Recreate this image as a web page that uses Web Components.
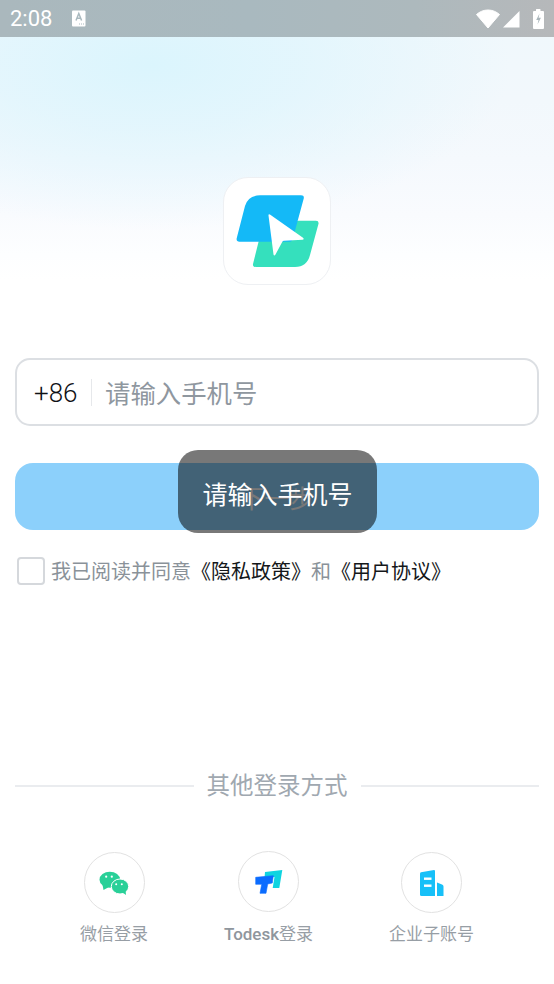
<!DOCTYPE html>
<html lang="zh-CN"><head><meta charset="utf-8"><title>登录</title>
<style>
html,body{margin:0;padding:0;background:#fff}
body{width:554px;height:984px;overflow:hidden;font-family:Roboto,"Noto Sans CJK SC",sans-serif}
</style></head><body>
<login-screen>
  <status-bar slot="status"></status-bar>
  <app-logo slot="logo"></app-logo>
  <phone-field slot="field" code="+86" placeholder="请输入手机号"></phone-field>
  <primary-button slot="button">下一步</primary-button>
  <agree-row slot="agree"></agree-row>
  <or-divider slot="divider">其他登录方式</or-divider>
  <login-options slot="options">
    <login-option label="微信登录" kind="wechat"></login-option>
    <login-option label="登录" latin="Todesk" kind="todesk"></login-option>
    <login-option label="企业子账号" kind="corp"></login-option>
  </login-options>
  <toast-box slot="toast">请输入手机号</toast-box>
</login-screen>
<script>
function def(name,html,init){
  customElements.define(name,class extends HTMLElement{
    constructor(){super();this.attachShadow({mode:'open'}).innerHTML=typeof html==='function'?html(this):html;}
    connectedCallback(){if(init)init(this)}
  });
}
def('login-screen',`<style>
:host{display:flex;flex-direction:column;position:relative;width:554px;height:984px;overflow:hidden;
background:
 radial-gradient(360px 165px at 150px 65px,#dbf5fd 0%,rgba(222,245,253,.72) 42%,rgba(230,246,253,0) 100%),
 linear-gradient(180deg,#eff8fc 0,#f2f8fc 100px,#f5f9fd 160px,#f9fbfe 215px,#fdfeff 255px,#fff 280px)}
.logo{display:flex;justify-content:center;padding-top:140px}
.field{padding:73px 15px 0}
.button{padding:37px 15px 0}
.agree{padding:26px 17px 0}
.divider{padding:184px 15px 0}
.options{padding:49px 0 0}
</style>
<slot name="status"></slot>
<div class="logo"><slot name="logo"></slot></div>
<div class="field"><slot name="field"></slot></div>
<div class="button"><slot name="button"></slot></div>
<div class="agree"><slot name="agree"></slot></div>
<div class="divider"><slot name="divider"></slot></div>
<div class="options"><slot name="options"></slot></div>
<slot name="toast"></slot>`);
def('status-bar',`<style>
:host{display:flex;align-items:center;height:37px;box-sizing:border-box;padding:0 10px 0 10px;
background:linear-gradient(90deg,#aab8bd 0,#a9b9bf 45%,#adb9bd 75%,#b6b8ba 100%);color:#fff;font:400 22px/37px Roboto,sans-serif}
.time{width:62px;letter-spacing:0}
svg{display:block}.sp{flex:1}
</style>
<span class="time">2:08</span>
<svg width="14" height="17" viewBox="0 0 14 17"><rect width="13.5" height="16" y=".5" rx="1" fill="#fff"/><path d="M4 10.500 6.800 3.500 9.600 10.500M5 8.200h3.600" fill="none" stroke="#a9b9bf" stroke-width="1.500"/><path d="M7 14h1M9 14h1M11 14h1" stroke="#a9b9bf" stroke-width="1"/></svg>
<span class="sp"></span>
<svg width="24" height="20" viewBox="0 0 24 20" style="margin-right:3px"><path d="M.5 5.500C3.500 2.800 7.500 1 12 1s8.500 1.800 11.500 4.500L12 19z" fill="#fff" stroke="#fff" stroke-linejoin="round"/></svg>
<svg width="17" height="18" viewBox="0 0 17 18" style="margin-right:13px"><path d="M0 17.500 16.500 1V17.500z" fill="#fff"/></svg>
<svg width="11" height="21" viewBox="0 0 11 21"><path d="M3 1.500a.5.500 0 0 1 .5-.5h3.500a.5.500 0 0 1 .5.500V3H10a1 1 0 0 1 1 1v16a1 1 0 0 1-1 1H1a1 1 0 0 1-1-1V4a1 1 0 0 1 1-1h2z" fill="#fff"/><path d="M6.500 5.500 3.200 12h2.300l-1 4.500 3.400-6.700H5.600z" fill="#a9b5ba"/></svg>`);
def('app-logo',`<style>
:host{display:block;width:108px;height:108px;box-sizing:border-box;background:#fff;border:1px solid #eef0f3;border-radius:25px}
svg{display:block}
</style>
<svg width="106" height="106" viewBox="0 0 106 106">
<path d="M74 42.700H92q3 0 2.500 3L86 77Q83 89 71 89H32q-3.500 0-3-3L35 62z" fill="#35e0bd"/>
<path d="M36 17.300H77q3.200 0 2.800 3L69 60q-1 3.700-3 3.700H15.500q-3.500 0-2.800-3.400L21 28Q24 17.300 36 17.300z" fill="#14b9f7"/>
<path d="M44.500 37.500q-.2-1.800 1.800-.8L79 59.800q1.500 1.500-.5 2L60 62.800q-1.200.1-1.800 1.200L51.500 76.600q-1.300 1.800-2 0z" fill="#fff"/>
</svg>`);
def('phone-field',t=>`<style>
:host{display:flex;align-items:center;height:68px;box-sizing:border-box;border:2px solid #dcdfe3;border-radius:15px;background:#fff;padding-left:17px}
.code{font:300 26px/1 Roboto,sans-serif;color:#0f1216;width:57px;flex:none;padding-top:1px}
.sep{width:1px;height:27px;background:#e6e8eb;flex:none;margin-right:13px}
.ph{font:400 25.400px/1.2 "Noto Sans CJK SC",sans-serif;color:#8f979f}
</style><span class="code">${t.getAttribute('code')}</span><span class="sep"></span><span class="ph">${t.getAttribute('placeholder')}</span>`);
def('primary-button',`<style>
:host{display:flex;align-items:center;justify-content:center;height:67px;border-radius:18px;background:#8cd0fb;color:#fff;font:400 25px/1.2 "Noto Sans CJK SC",sans-serif}
</style><slot></slot>`);
def('agree-row',`<style>
:host{display:flex;align-items:center;gap:7px;font:400 20px/28px "Noto Sans CJK SC",sans-serif;color:#8a9299}
.box{width:28px;height:28px;box-sizing:border-box;border:2px solid #d5d8dc;border-radius:4px;background:#fff;flex:none;margin-right:-1px}
.t{padding-top:1px}
b{font-weight:400;color:#14171a}
</style><span class="box"></span><span class="t">我已阅读并同意<b>《隐私政策》</b>和<b>《用户协议》</b></span>`);
def('or-divider',`<style>
:host{display:flex;align-items:center;gap:13px;height:34px;font:400 23.500px/30px "Noto Sans CJK SC",sans-serif;color:#a0a8b0}
i{flex:1;height:1.500px;background:#eaecef}
span{align-self:flex-start}
</style><i></i><span><slot></slot></span><i></i>`);
def('login-options',`<style>
:host{display:grid;grid-template-columns:228px 81px 245px;align-items:start}
</style><slot></slot>`);
const ICONS={
wechat:`<svg width="30" height="24" viewBox="0 0 30 24"><ellipse cx="10.800" cy="8.700" rx="10.300" ry="8" fill="#29d098"/><path d="M3.500 13.500 4.500 19 10 16z" fill="#29d098"/><ellipse cx="21" cy="15.500" rx="8.700" ry="7.500" fill="#29d098" stroke="#fff" stroke-width="1"/><path d="M23.500 21.500 27 24 26.500 19z" fill="#29d098"/><circle cx="7.200" cy="5.700" r="1.100" fill="#fff"/><circle cx="12.800" cy="5.700" r="1.100" fill="#fff"/><circle cx="17.200" cy="13.300" r="1" fill="#fff"/><circle cx="22.800" cy="13.300" r="1" fill="#fff"/></svg>`,
todesk:`<svg width="28" height="24" viewBox="0 0 28 24"><path d="M10 2 27.300 0 24.300 18H17.700L19.500 7 9.500 8z" fill="#0fd4e0"/><path d="M.7 7.300 18.300 5.700 17.300 13 12.700 14 11 23.300H5L6.700 14.300H.7z" fill="#0b6cff" stroke="#0b6cff" stroke-width=".6" stroke-linejoin="round"/></svg>`,
corp:`<svg width="24" height="26" viewBox="0 0 24 26"><path d="M0 3.500Q0 2.500 1 2.300L14 0q1 0 1 1v25H1.500Q0 26 0 24.500z" fill="#17c0f8"/><rect x="4" y="7.500" width="7.500" height="2.400" fill="#fff"/><rect x="4" y="14.500" width="7.500" height="2.400" fill="#fff"/><path d="M17 12.500l5 2q1.500.6 1.500 2V26H17z" fill="#17c0f8"/></svg>`};
def('login-option',t=>`<style>
:host{display:flex;flex-direction:column;align-items:center;font:400 17px/24px "Noto Sans CJK SC",sans-serif;color:#979ea5}
.c{width:61px;height:61px;box-sizing:border-box;border:1px solid #e2e2e2;border-radius:50%;display:flex;align-items:center;justify-content:center;background:#fff;flex:none}
.l{margin-top:8px;white-space:nowrap}
.lat{font:500 17px/24px Roboto,sans-serif;color:#8f969d}
:host([kind=todesk]) .c{margin-top:-1px}
:host([kind=todesk]) .l{margin-top:9px}
</style><div class="c">${ICONS[t.getAttribute('kind')]}</div><div class="l">${t.hasAttribute('latin')?`<span class="lat">${t.getAttribute('latin')}</span>`:''}${t.getAttribute('label')}</div>`);
def('toast-box',`<style>
:host{position:absolute;left:178px;top:450px;width:199px;height:83px;box-sizing:border-box;padding-top:3px;border-radius:20px;background:rgba(0,0,0,.53);color:#fff;display:flex;align-items:center;justify-content:center;font:400 25px/1.2 "Noto Sans CJK SC",sans-serif}
</style><slot></slot>`);
</script>
</body></html>
